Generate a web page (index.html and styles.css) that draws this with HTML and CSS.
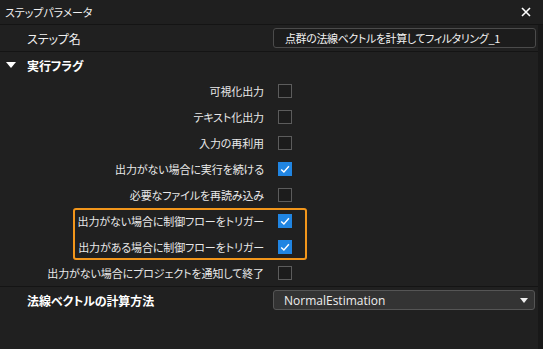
FILE: index.html
```html
<!DOCTYPE html>
<html lang="ja">
<head>
  <meta charset="UTF-8">
  <title>ステップパラメータ</title>
  <link rel="stylesheet" href="styles.css">
</head>
<body>
  <div class="panel">
    <div class="titlebar">
      <span>ステップパラメータ</span>
      <svg class="close" width="10" height="10" viewBox="0 0 10 10"><path d="M1 1L9 9M9 1L1 9" stroke="#fff" stroke-width="1.6"/></svg>
    </div>
    <div class="body">
      <div class="main">
        <div class="row name-row">
          <span class="name-label">ステップ名</span>
          <div class="input">点群の法線ベクトルを計算してフィルタリング_1</div>
        </div>
        <div class="section">
          <svg class="caret" width="10" height="6" viewBox="0 0 10 6"><path d="M0 0H10L5 6Z" fill="#fff"/></svg>
          <span>実行フラグ</span>
        </div>
        <div class="flags">
          <div class="flag"><span class="label">可視化出力</span><span class="box"></span></div>
          <div class="flag"><span class="label">テキスト化出力</span><span class="box"></span></div>
          <div class="flag"><span class="label">入力の再利用</span><span class="box"></span></div>
          <div class="flag"><span class="label">出力がない場合に実行を続ける</span><span class="box checked"><svg viewBox="0 0 14 14"><path d="M3.2 7.4L5.9 10L10.9 4.2" fill="none" stroke="#fff" stroke-width="1.4"/></svg></span></div>
          <div class="flag"><span class="label">必要なファイルを再読み込み</span><span class="box"></span></div>
          <div class="highlight">
            <div class="flag"><span class="label">出力がない場合に制御フローをトリガー</span><span class="box checked"><svg viewBox="0 0 14 14"><path d="M3.2 7.4L5.9 10L10.9 4.2" fill="none" stroke="#fff" stroke-width="1.4"/></svg></span></div>
            <div class="flag"><span class="label">出力がある場合に制御フローをトリガー</span><span class="box checked"><svg viewBox="0 0 14 14"><path d="M3.2 7.4L5.9 10L10.9 4.2" fill="none" stroke="#fff" stroke-width="1.4"/></svg></span></div>
          </div>
          <div class="flag"><span class="label">出力がない場合にプロジェクトを通知して終了</span><span class="box"></span></div>
        </div>
        <div class="row method-row">
          <span class="method-label">法線ベクトルの計算方法</span>
          <div class="select">
            <span>NormalEstimation</span>
            <svg width="8" height="5" viewBox="0 0 8 5"><path d="M0 0H8L4 5Z" fill="#eee"/></svg>
          </div>
        </div>
      </div>
      <div class="scroll"></div>
    </div>
  </div>
</body>
</html>
```

FILE: styles.css
```css
html, body { margin: 0; padding: 0; background: #202020; }
body { font-family: "Noto Sans CJK JP", "Noto Sans", sans-serif; font-size: 11px; letter-spacing: -0.1px; color: #e8e8e8; font-feature-settings: "palt"; width: 543px; height: 349px; overflow: hidden; }
.panel { height: 349px; display: flex; flex-direction: column; }
.titlebar { height: 24px; display: flex; align-items: center; justify-content: space-between; padding: 0 12px 0 5px; background: #1f1f1f; border-bottom: 1px solid #141414; color: #f0f0f0; }
.close { display: block; }
.body { flex: 1; display: flex; }
.main { flex: 1; }
.scroll { width: 5px; background: #181818; }
.row { display: flex; align-items: center; }
.name-row { height: 26px; border-bottom: 1px solid #141414; }
.name-label { width: 246px; padding-left: 27px; color: #f0f0f0; font-size: 12px; }
.input { width: 250px; height: 18px; line-height: 18px; border: 1px solid #4b4b4b; border-radius: 3px; background: #1c1c1c; padding-left: 11px; color: #f2f2f2; font-size: 11px; letter-spacing: -0.4px; }
.section { height: 26px; display: flex; align-items: center; font-weight: bold; font-size: 12px; color: #fff; }
.caret { margin: 0 11px 0 6px; }
.flag { height: 26px; display: flex; align-items: center; }
.label { width: 264px; text-align: right; margin-right: 14px; white-space: nowrap; }
.highlight { margin-left: 73px; width: 234px; border-radius: 3px; box-shadow: inset 0 0 0 2px #f2961b; }
.highlight .label { width: 191px; }
.box { width: 12px; height: 12px; border: 1px solid #5c5c5c; background: #1c1c1c; display: block; }
.box.checked { width: 14px; height: 14px; border: none; background: #2085e2; }
.box svg { display: block; width: 14px; height: 14px; }
.method-row { height: 26px; border-top: 1px solid #141414; }
.method-label { width: 246px; padding-left: 27px; font-weight: bold; font-size: 12px; color: #fff; }
.select { width: 244px; height: 18px; border: 1px solid #555; border-radius: 3px; background: #333; display: flex; align-items: center; justify-content: space-between; padding: 0 6px 0 10px; font-family: "Open Sans", "Noto Sans", sans-serif; font-size: 12px; letter-spacing: 0; color: #eee; }
```
